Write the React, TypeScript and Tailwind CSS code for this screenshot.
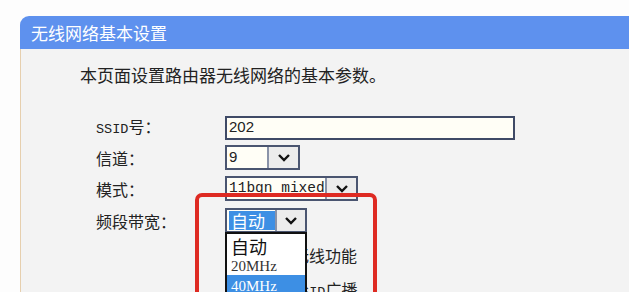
import React from "react";

const cjk = { fontFamily: '"Noto Sans CJK SC", "Noto Sans", sans-serif' };
const mono = { fontFamily: '"Liberation Mono", "Noto Sans CJK SC", monospace' };
const serif = { fontFamily: '"Liberation Serif", "Noto Sans CJK SC", serif' };
const arial = { fontFamily: '"Liberation Sans", Arial, sans-serif' };

function Chevron() {
  return (
    <svg width="14" height="9" viewBox="0 0 14 9">
      <path d="M2 2 L7 7 L12 2" fill="none" stroke="#111" strokeWidth="2.4" />
    </svg>
  );
}

function Select({
  width,
  textW,
  children,
  selected,
}: {
  width: string;
  textW: string;
  children: React.ReactNode;
  selected?: boolean;
}) {
  return (
    <div className={`flex h-[25px] border-2 border-[#4a5570] bg-[#fffef6] ${width}`}>
      <div className={`flex items-center ${textW} pl-[2px]`}>
        {selected ? (
          <div className="flex h-[19px] w-full items-center bg-[#3d8fe4] pl-[2px] text-[17px] leading-none text-white" style={cjk}>
            {children}
          </div>
        ) : (
          children
        )}
      </div>
      <div className="flex flex-1 items-center justify-center border-l-2 border-[#8a93a8] bg-[#ececec]">
        <Chevron />
      </div>
    </div>
  );
}

function Row({ label, children, mt }: { label: React.ReactNode; children: React.ReactNode; mt: string }) {
  return (
    <div className={`flex h-[25px] items-center ${mt}`}>
      <div className="w-[129px] text-[16px] leading-none text-[#222]">{label}</div>
      {children}
    </div>
  );
}

export default function App() {
  return (
    <div className="relative h-[292px] w-[629px] overflow-hidden bg-[#fdfdfd] pl-[20px] pt-[16px]" style={cjk}>
      <div className="h-[400px] overflow-hidden rounded-tl-[9px]">
        <div className="flex h-[33px] items-center bg-[#5e91ee] pl-[11px] text-[17px] text-white" style={cjk}>
          无线网络基本设置
        </div>
        <div className="h-full border-l border-[#e6cfae] bg-[#f3f3f3] pt-[15px]">
          <div className="pl-[59px] text-[17px] leading-[22px] text-[#222]">本页面设置路由器无线网络的基本参数。</div>
          <div className="pl-[75px]">
            <Row mt="mt-[29px]" label={<><span style={mono} className="text-[13.5px]">SSID</span>号：</>}>
              <div className="flex h-[24px] w-[290px] items-center border-2 border-[#3f4a66] bg-[#fffef6] pl-[2px] text-[15px] text-[#222]" style={arial}>
                202
              </div>
            </Row>
            <Row mt="mt-[5px]" label="信道：">
              <Select width="w-[75px]" textW="w-[40px]">
                <span className="text-[15px] text-[#222]" style={arial}>9</span>
              </Select>
            </Row>
            <Row mt="mt-[6px]" label="模式：">
              <Select width="w-[133px]" textW="w-[98px]">
                <span className="text-[14.5px] leading-none text-[#222]" style={mono}>11bgn mixed</span>
              </Select>
            </Row>
            <Row mt="mt-[7px]" label="频段带宽：">
              <Select width="w-[82px]" textW="w-[48px]" selected>
                自动
              </Select>
            </Row>
            <div className="ml-[137px] mt-[11px] flex h-[22px] items-center gap-[15px] text-[16px] text-[#222]">
              <div className="h-[13px] w-[13px] border border-[#555] bg-white" />
              <span>开启无线功能</span>
            </div>
            <div className="ml-[137px] mt-[13px] flex h-[22px] items-center gap-[15px] text-[16px] text-[#222]">
              <div className="h-[13px] w-[13px] border border-[#555] bg-white" />
              <span>
                开启<span style={mono} className="text-[13.5px]">SSID</span>广播
              </span>
            </div>
          </div>
        </div>
      </div>

      {/* red highlight box */}
      <div className="absolute left-[195px] top-[193px] h-[150px] w-[182px] rounded-[7px] border-[4px] border-[#de2a22]" />

      {/* open dropdown list */}
      <div className="absolute left-[225px] top-[232px] w-[82px] border-2 border-[#111] bg-white">
        <div className="h-[24px] pl-[4px] pt-[1px] text-[18px] leading-[22px] text-[#111]" style={cjk}>自动</div>
        <div className="h-[17px] pl-[4px] text-[15px] leading-[17px] text-[#333]" style={serif}>20MHz</div>
        <div className="h-[30px] bg-[#3d8fe4] pl-[4px] pt-[1px] text-[15px] leading-[20px] text-white" style={serif}>40MHz</div>
      </div>
    </div>
  );
}
